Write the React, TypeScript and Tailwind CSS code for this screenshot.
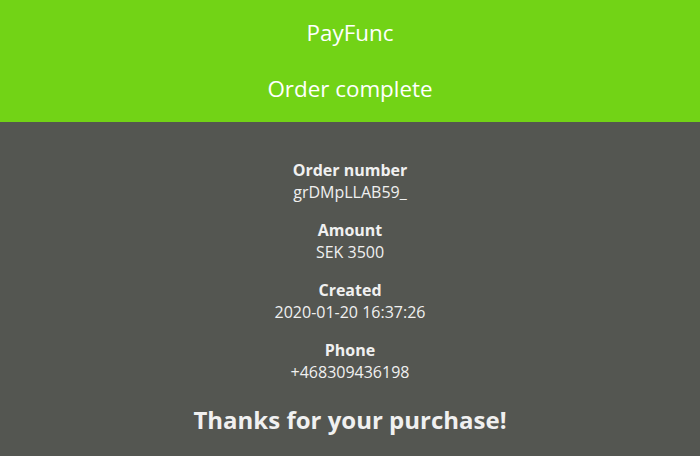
const details = [
  { label: "Order number", value: "grDMpLLAB59_" },
  { label: "Amount", value: "SEK 3500" },
  { label: "Created", value: "2020-01-20 16:37:26" },
  { label: "Phone", value: "+468309436198" },
];

export default function App() {
  return (
    <div className="min-h-[456px] bg-[#545651] font-['Open_Sans',sans-serif] text-center">
      {/* Header */}
      <header className="flex flex-col items-center bg-[#72d316] pt-[18px] pb-[18px] text-white">
        <div className="text-[22.4px] leading-[30px]">PayFunc</div>
        <div className="mt-[26px] text-[22.4px] leading-[30px]">Order complete</div>
      </header>

      {/* Order details */}
      <main className="flex flex-col items-center pt-[37px] text-[#f0f0f0]">
        {details.map((d, i) => (
          <div key={d.label} className={i > 0 ? "mt-[16px]" : ""}>
            <div className="text-[16px] font-bold leading-[22px]">{d.label}</div>
            <div className="text-[16px] leading-[22px]">{d.value}</div>
          </div>
        ))}
        <div className="mt-[20px] text-[24px] font-bold leading-[33px]">Thanks for your purchase!</div>
      </main>
    </div>
  );
}
